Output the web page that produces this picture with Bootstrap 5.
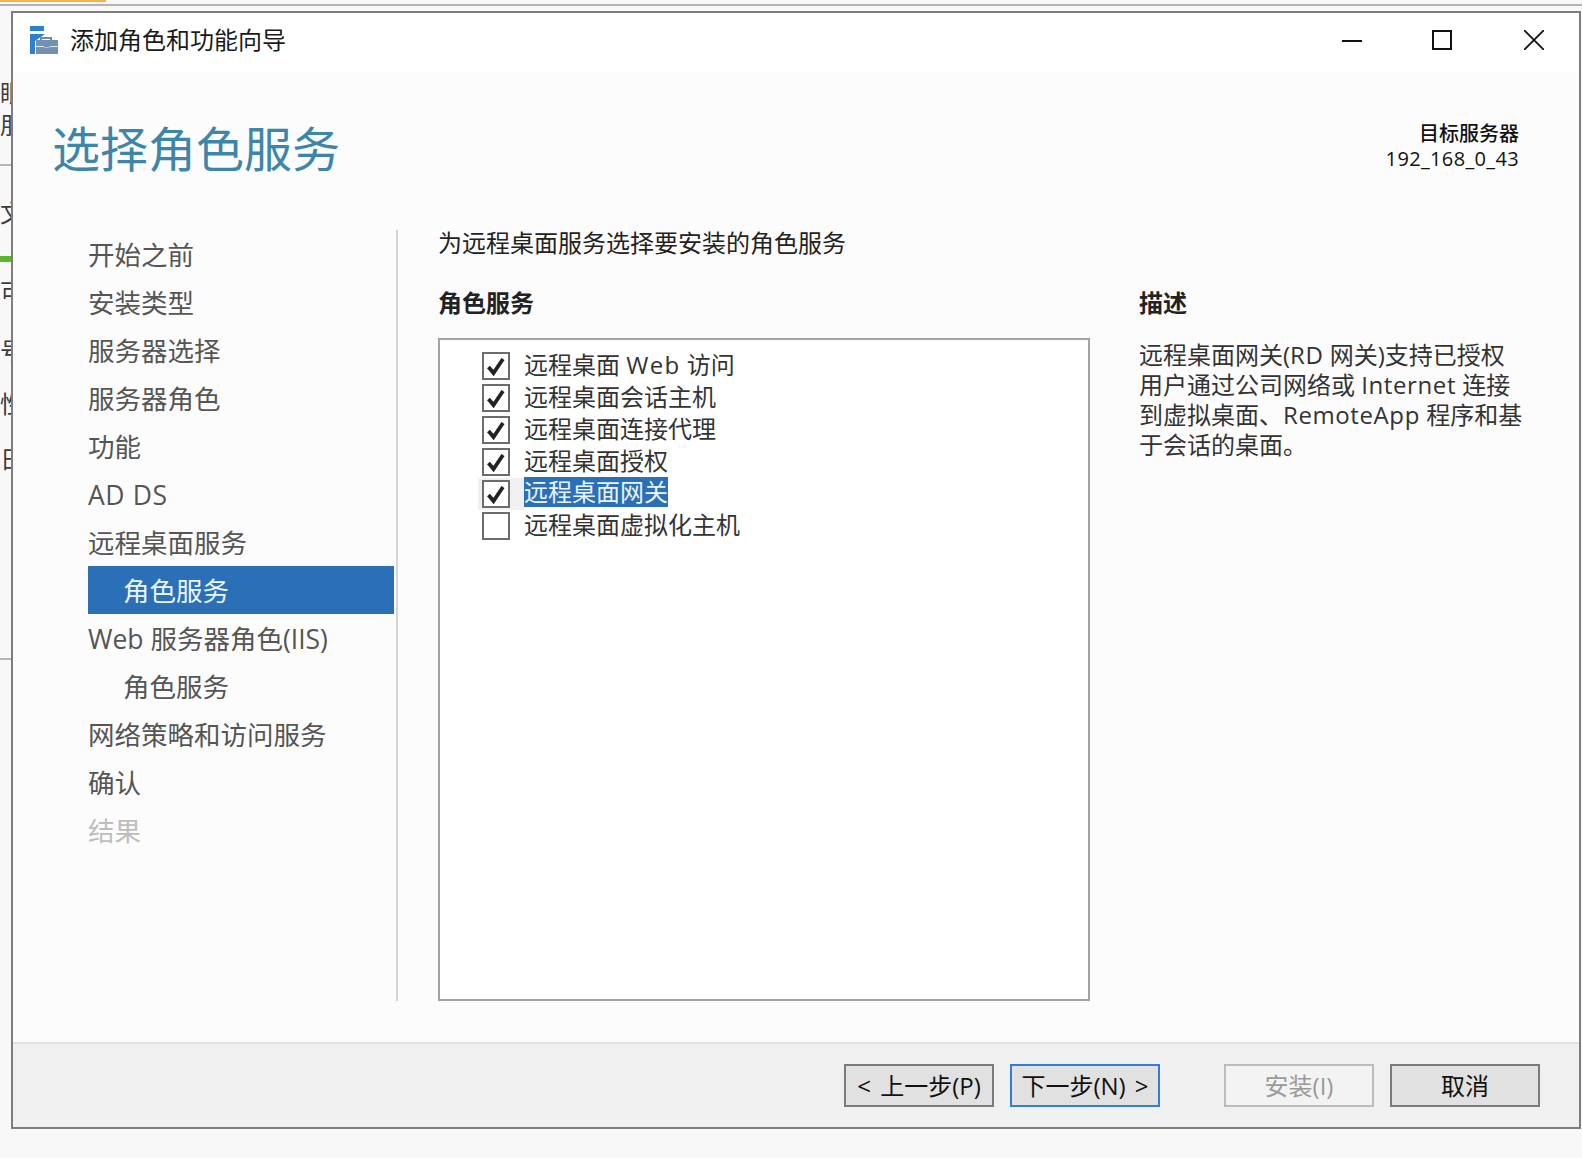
<!DOCTYPE html>
<html lang="zh-CN">
<head>
<meta charset="utf-8">
<title>添加角色和功能向导</title>
<link href="https://cdn.jsdelivr.net/npm/bootstrap@5.3.0/dist/css/bootstrap.min.css" rel="stylesheet">
<style>
html,body{height:1158px;overflow:hidden}
body{background:#f8f8f8;font-family:"Open Sans","Noto Sans CJK SC",sans-serif;font-size:24px;color:#222;line-height:30px}
.top-strip{height:11px}
.tab-mark{width:106px;height:2px;background:#f6b24e}
.top-rule{height:2px;margin-top:2px;background:#b4b4b4}
.page-row{height:1118px}
.behind{width:11px;overflow:hidden;color:#3c3c3c;line-height:26px;white-space:nowrap}
.behind>div:nth-child(1){margin-top:69px}
.behind>div:nth-child(2){margin-top:6px}
.behind>div:nth-child(3){margin-top:26px;height:2px;background:#b8b8b8}
.behind>div:nth-child(4){margin-top:34px}
.behind>div:nth-child(5){margin-top:30px;height:6px;background:#5db52e}
.behind>div:nth-child(6){margin-top:17px}
.behind>div:nth-child(7){margin-top:33px}
.behind>div:nth-child(8){margin-top:27px}
.behind>div:nth-child(9){margin-top:29px}
.behind>div:nth-child(10){margin-top:186px;height:2px;background:#b8b8b8}
.wizard{width:1570px;height:1118px;border:2px solid #7d7d7d;background:#fcfcfc}
.title-bar{height:59px;background:#fff;padding:0 35px 6px 17px;color:#1a1a1a}
.title-text{margin-left:12px;line-height:30px}
.win-ctrls{gap:70px}
.win-ctrls svg{display:block;width:20px;height:20px}
.win-ctrls svg:last-child{margin-left:2px}
.head-band{height:158px;padding:47px 60px 0 39px}
.page-title{font-size:48px;line-height:60px;color:#3d86a9;font-weight:400;margin:0}
.target{font-size:20px;line-height:25px;margin-top:2px;color:#111}
.target-label{font-weight:500}
.target-ip{letter-spacing:.35px}
.body-band{padding-bottom:41px}
.step-col{width:385px;padding:0 2px 0 75px;border-right:2px solid #d4d4d4;flex:none}
.step{height:48px;line-height:50px;font-size:26.5px;color:#555}
.step.sub{padding-left:35px}
.step.on{background:#2b6fb6;color:#eaf5ff}
.step.off{color:#bdbdbd}
.lat{letter-spacing:.6px}
.lat-web{letter-spacing:1.3px;word-spacing:1px}
.mid-col{width:692px;padding-left:40px;flex:none}
.intro{line-height:26px}
.sec-title{line-height:30px;font-weight:700;margin:32px 0 20px;color:#222}
.choice-box{flex:1;border:2px solid #a3a3a3;background:#fff;padding:10px 0 0 38px}
.choice{height:32px}
.check-cell{width:46px;height:32px;padding:2px 0 0 4px;flex:none}
.check-cell .form-check-input{width:28px;height:28px;margin:0;float:none;display:block;border:2px solid #6c6c6c;border-radius:0;background-color:#fff;box-shadow:none}
.check-cell .form-check-input:checked{background-color:#fff;border-color:#6c6c6c;background-size:22px 22px;background-image:url("data:image/svg+xml,%3Csvg xmlns='http://www.w3.org/2000/svg' viewBox='0 0 22 22'%3E%3Cpath d='M3.500 12l5 6 9.500-14' fill='none' stroke='%23222' stroke-width='3.800'/%3E%3C/svg%3E")}
.choice.focused .check-cell{background:#f0f0f0}
.choice-text{line-height:30px;height:32px;color:#333}
.choice.focused .choice-text{background:#2b6fb6;color:#eaf5ff;height:30px;margin-top:-1px}
.desc-col{padding:58px 0 0 49px}
.desc-col .sec-title{margin:0 0 22px}
.desc-text{color:#333}
.foot-band{height:85px;flex:none;background:#f0f0f0;border-top:2px solid #e2e2e2;padding:20px 39px 0 0;gap:16px}
.wiz-btn{width:150px;height:43px;padding:0;border-radius:0;font-size:24px;line-height:39px;border:2px solid #7a7a7a;background:#e1e1e1;color:#111;white-space:nowrap;word-spacing:3px}
.wiz-btn.default-btn{border-color:#2f7ed8}
.wiz-btn:disabled{background:#f3f3f3;border-color:#bcbcbc;color:#9a9a9a;opacity:1}
.wiz-btn.after-gap{margin-left:48px}
</style>
</head>
<body>
<div class="top-strip">
  <div class="tab-mark"></div>
  <div class="top-rule"></div>
</div>
<div class="page-row d-flex">
  <div class="behind flex-shrink-0">
    <div>眼</div><div>朋</div><div></div><div>文</div><div></div><div>可</div><div>号</div><div>性</div><div>日</div><div></div>
  </div>
  <div class="wizard d-flex flex-column flex-shrink-0">
    <div class="title-bar d-flex align-items-center flex-shrink-0">
      <svg width="28" height="28" viewBox="0 0 28 28" aria-hidden="true">
        <path fill="#2f7fd0" d="M0 0H14V5H0ZM0 8H15L5 15V28H0Z"/>
        <path fill="none" stroke="#6d8cab" stroke-width="2" d="M11 14V12H21V14"/>
        <path fill="#7391ae" d="M6 14H28V28H6Z"/>
        <path fill="#dfe6ee" d="M6 20H14V21.500H20V20H28V21H20V22H14V21H6Z"/>
      </svg>
      <span class="title-text">添加角色和功能向导</span>
      <div class="win-ctrls d-flex ms-auto">
        <svg viewBox="0 0 20 20" aria-hidden="true"><path stroke="#111" stroke-width="2" d="M0 11H20"/></svg>
        <svg viewBox="0 0 20 20" aria-hidden="true"><rect x="1" y="1" width="18" height="18" fill="none" stroke="#111" stroke-width="2"/></svg>
        <svg viewBox="0 0 20 20" aria-hidden="true"><path stroke="#111" stroke-width="1.800" d="M0 0L20 20M20 0L0 20"/></svg>
      </div>
    </div>
    <div class="head-band d-flex justify-content-between flex-shrink-0">
      <h1 class="page-title">选择角色服务</h1>
      <div class="target text-end"><span class="target-label">目标服务器</span><br><span class="target-ip">192_168_0_43</span></div>
    </div>
    <div class="body-band d-flex flex-grow-1">
      <div class="step-col">
        <div class="step">开始之前</div>
        <div class="step">安装类型</div>
        <div class="step">服务器选择</div>
        <div class="step">服务器角色</div>
        <div class="step">功能</div>
        <div class="step"><span class="lat">AD DS</span></div>
        <div class="step">远程桌面服务</div>
        <div class="step sub on">角色服务</div>
        <div class="step">Web 服务器角色(IIS)</div>
        <div class="step sub">角色服务</div>
        <div class="step">网络策略和访问服务</div>
        <div class="step">确认</div>
        <div class="step off">结果</div>
      </div>
      <div class="mid-col d-flex flex-column">
        <div class="intro">为远程桌面服务选择要安装的角色服务</div>
        <div class="sec-title">角色服务</div>
        <div class="choice-box">
          <div class="choice d-flex"><div class="check-cell"><input class="form-check-input" type="checkbox" checked></div><span class="choice-text">远程桌面 <span class="lat-web">Web</span> 访问</span></div>
          <div class="choice d-flex"><div class="check-cell"><input class="form-check-input" type="checkbox" checked></div><span class="choice-text">远程桌面会话主机</span></div>
          <div class="choice d-flex"><div class="check-cell"><input class="form-check-input" type="checkbox" checked></div><span class="choice-text">远程桌面连接代理</span></div>
          <div class="choice d-flex"><div class="check-cell"><input class="form-check-input" type="checkbox" checked></div><span class="choice-text">远程桌面授权</span></div>
          <div class="choice focused d-flex"><div class="check-cell"><input class="form-check-input" type="checkbox" checked></div><span class="choice-text">远程桌面网关</span></div>
          <div class="choice d-flex"><div class="check-cell"><input class="form-check-input" type="checkbox"></div><span class="choice-text">远程桌面虚拟化主机</span></div>
        </div>
      </div>
      <div class="desc-col">
        <div class="sec-title">描述</div>
        <div class="desc-text">远程桌面网关(<span class="lat">RD</span> 网关)支持已授权<br>用户通过公司网络或 <span class="lat">Internet</span> 连接<br>到虚拟桌面、<span class="lat">RemoteApp</span> 程序和基<br>于会话的桌面。</div>
      </div>
    </div>
    <div class="foot-band d-flex justify-content-end">
      <button class="btn wiz-btn" type="button">&lt; 上一步(P)</button>
      <button class="btn wiz-btn default-btn" type="button">下一步(N) &gt;</button>
      <button class="btn wiz-btn after-gap" type="button" disabled>安装(I)</button>
      <button class="btn wiz-btn" type="button">取消</button>
    </div>
  </div>
</div>
<script src="https://cdn.jsdelivr.net/npm/bootstrap@5.3.0/dist/js/bootstrap.bundle.min.js"></script>
</body>
</html>
